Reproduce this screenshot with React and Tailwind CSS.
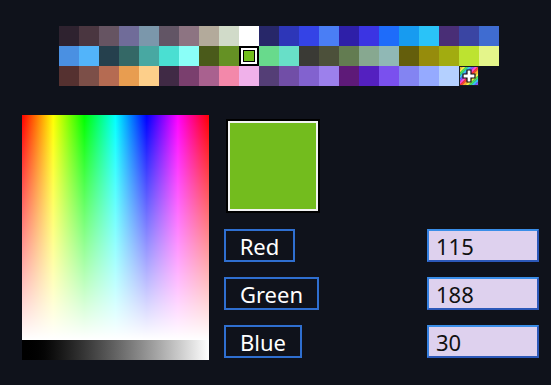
import React from 'react';

// palette swatches, three rows of 22
const rows = [
  ['#2e222f', '#4a3640', '#665462', '#706c99', '#7b97ab', '#625565', '#8d7482', '#b3aa9b', '#d1dbc9', '#ffffff', '#272769', '#2d36b8',
   '#3443e6', '#4a7ef5', '#2e1fa8', '#3b34e3', '#1e6cfa', '#179bf0', '#2ac3f8', '#492e76', '#3a45a3', '#3f6cd1'],
  ['#4a90e2', '#52b4fa', '#25404d', '#346866', '#48a8a2', '#4adfd2', '#8afff8', '#4a5a1a', '#659124', 'selected', '#68da8c', '#68dfc8',
   '#3a3a35', '#4c503a', '#637c51', '#87a890', '#90b8b5', '#645e0c', '#968c0c', '#a2ac10', '#bde330', '#e4f58a'],
  ['#553130', '#7c4f48', '#b56b52', '#e89d50', '#fdcf8a', '#402a45', '#7a3f6e', '#a9618f', '#f388aa', '#f0b1ea', '#543e76', '#714ea7',
   '#8262cf', '#9c80ec', '#5e1a78', '#5420c0', '#7a50ee', '#8384f2', '#95aaff', '#b4d0ff', 'add', null],
];

const current = { r: 115, g: 188, b: 30 };

function AddSwatch() {
  const stripes = ['#ff3b3b', '#ffb02e', '#f6f04a', '#4be35c', '#36c6f4', '#7a5cff', '#ff4fd8'];
  return (
    <svg width="20" height="20" viewBox="0 0 20 20">
      <defs>
        <clipPath id="sw">
          <rect x="1" y="1" width="18" height="18" />
        </clipPath>
      </defs>
      <rect width="20" height="20" fill="#1a1c24" />
      <g clipPath="url(#sw)">
        {Array.from({ length: 16 }).map((_, i) => (
          <line key={i} x1={-20 + i * 3} y1="20" x2={i * 3} y2="0" stroke={stripes[i % stripes.length]} strokeWidth="2.2" />
        ))}
      </g>
      <path d="M8 4h4v4h4v4h-4v4H8v-4H4V8h4z" fill="#fff" stroke="#111" strokeWidth="1.2" />
    </svg>
  );
}

function Swatch({ c }) {
  if (c === 'selected') {
    return (
      <div className="w-[20px] h-[20px] bg-black p-[2px]">
        <div className="w-full h-full border-2 border-white bg-black p-[1px]">
          <div className="w-full h-full bg-[#73be1e]" />
        </div>
      </div>
    );
  }
  if (c === 'add') return <AddSwatch />;
  if (!c) return <div className="w-[20px] h-[20px]" />;
  return <div className="w-[20px] h-[20px]" style={{ backgroundColor: c }} />;
}

function ChannelRow({ label, value, width }) {
  return (
    <div className="flex items-center justify-between h-[33px]">
      <button className={`${width} h-[33px] border-2 border-[#2f6fd0] bg-[#0f121b] text-white text-[22px] leading-none flex items-center justify-center`}>
        {label}
      </button>
      <div className="w-[112px] h-[33px] border-2 border-[#2c58b8] border-t-[#3a8ee8] border-l-[#3580e0] bg-[#ded1ee] text-[#111] text-[22px] leading-none flex items-center pl-[7px]">
        {value}
      </div>
    </div>
  );
}

export default function App() {
  return (
    <div className="w-[551px] h-[385px] bg-[#0f121b] font-['Noto_Sans','Open_Sans',sans-serif] overflow-hidden">
      <div className="pt-[26px] pl-[59px]">
        {rows.map((row, i) => (
          <div key={i} className="flex">
            {row.map((c, j) => (
              <Swatch key={j} c={c} />
            ))}
          </div>
        ))}
      </div>

      <div className="flex mt-[29px] pl-[22px]">
        <div className="w-[187px] flex flex-col">
          <div className="h-[225px] bg-[linear-gradient(to_bottom,rgba(255,255,255,0),#ffffff),linear-gradient(to_right,#ff0000,#ffff00,#00ff00,#00ffff,#0000ff,#ff00ff,#ff0000)]" />
          <div className="h-[20px] bg-linear-to-r from-black to-white" />
        </div>

        <div className="ml-[15px] w-[315px] flex flex-col">
          <div className="ml-[2px] mt-[4px] w-[94px] h-[94px] border-2 border-black">
            <div className="w-full h-full border-2 border-[#f2f2f2] bg-[#73bc1e]" />
          </div>
          <div className="mt-[16px] flex flex-col gap-[15px]">
            <ChannelRow label="Red" value={current.r} width="w-[71px]" />
            <ChannelRow label="Green" value={current.g} width="w-[95px]" />
            <ChannelRow label="Blue" value={current.b} width="w-[78px]" />
          </div>
        </div>
      </div>
    </div>
  );
}
